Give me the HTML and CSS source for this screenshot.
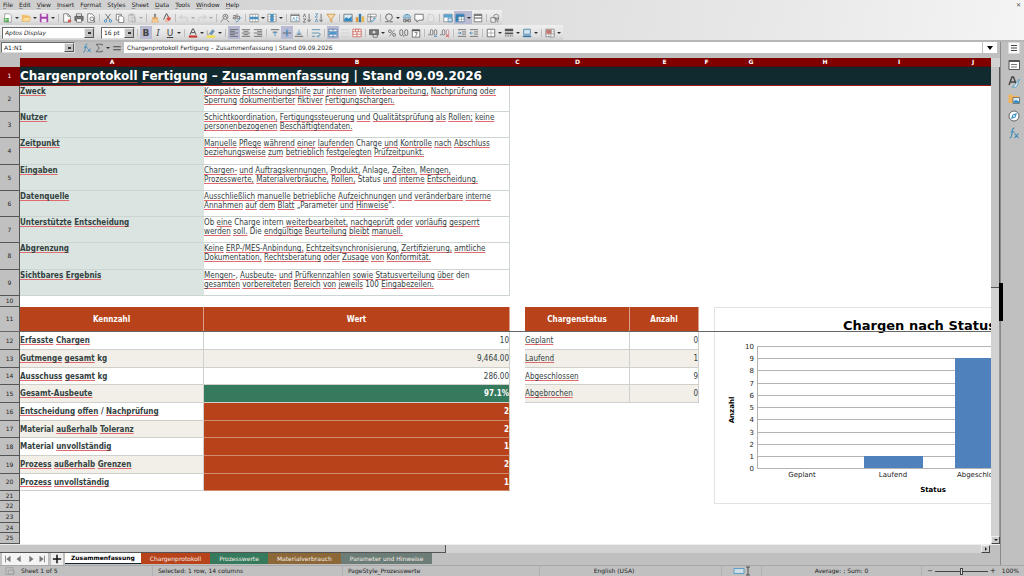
FILE: index.html
```html
<!DOCTYPE html>
<html lang="de">
<head>
<meta charset="utf-8">
<title>Chargenprotokoll Fertigung</title>
<link rel="stylesheet" href="styles.css">
</head>
<body>
<svg class="defs" aria-hidden="true">
  <symbol id="new" viewBox="0 0 12 12"><path d="M2 1h6l2 2v8H2z" fill="#fff" stroke="#777" stroke-width=".7"/><path d="M1 6h6v5H1z" fill="#4ca64c"/><path d="M1 8h6M3.500 6v5" stroke="#fff" stroke-width=".6"/></symbol>
  <symbol id="open" viewBox="0 0 12 12"><path d="M1 2h4l1 1h4v7H1z" fill="#f3c06b"/><path d="M3 5h9l-2 5H1z" fill="#fbdc9c" stroke="#e0a040" stroke-width=".6"/></symbol>
  <symbol id="save" viewBox="0 0 12 12"><path d="M1 1h9l1 1v9H1z" fill="#a345a8"/><path d="M3 1h6v3.500H3zM3 7h6v4H3z" fill="#f3e6f5"/></symbol>
  <symbol id="pdf" viewBox="0 0 12 12"><path d="M2 1h5l3 3v7H2z" fill="#fff" stroke="#555" stroke-width=".8"/><path d="M7 1v3h3" fill="none" stroke="#555" stroke-width=".7"/><path d="M7 8h4v3H7z" fill="#d65a52"/></symbol>
  <symbol id="print" viewBox="0 0 12 12"><path d="M3 1h6v3H3z" fill="#fff" stroke="#444" stroke-width=".8"/><path d="M1 4h10v5H1z" fill="#777" stroke="#444" stroke-width=".7"/><path d="M3 7h6v4H3z" fill="#fff" stroke="#444" stroke-width=".7"/></symbol>
  <symbol id="preview" viewBox="0 0 12 12"><path d="M2 1h5l3 3v7H2z" fill="#fff" stroke="#555" stroke-width=".8"/><circle cx="7" cy="7" r="2.300" fill="#e8f0f4" stroke="#555" stroke-width=".8"/><path d="M9 9l2 2" stroke="#555"/></symbol>
  <symbol id="cut" viewBox="0 0 12 12"><path d="M3 1l5 7M9 1L4 8" stroke="#555" stroke-width=".9"/><circle cx="3" cy="9.500" r="1.500" fill="none" stroke="#2f86c0"/><circle cx="9" cy="9.500" r="1.500" fill="none" stroke="#2f86c0"/></symbol>
  <symbol id="copy" viewBox="0 0 12 12"><path d="M1.500 1.500h6v7h-6z" fill="#fff" stroke="#555" stroke-width=".8"/><path d="M4.500 3.500h4l2 2v6h-6z" fill="#fff" stroke="#555" stroke-width=".8"/></symbol>
  <symbol id="paste" viewBox="0 0 12 12"><path d="M2 2h7v8H2zM4 1h3v2H4zM6 5h4v6H6z" fill="#ddd" stroke="#aaa" stroke-width=".7"/></symbol>
  <symbol id="brush" viewBox="0 0 12 12"><path d="M5 1h2v4H5z" fill="#777"/><path d="M3 5h6v2H3z" fill="#e39a4d"/><path d="M3 7h6l1 4H2z" fill="#f6cf9a" stroke="#d99850" stroke-width=".6"/></symbol>
  <symbol id="clear" viewBox="0 0 12 12"><path d="M2 8L5 1h1l2 5" fill="none" stroke="#444"/><path d="M5 7l3-3 3 3-3 3z" fill="#d8564d"/><path d="M3 9l2-2 3 3-1 1H4z" fill="#f2b9a0"/></symbol>
  <symbol id="undo" viewBox="0 0 12 12"><path d="M4 2L1 5l3 3M1 5h6q4 0 3 5" fill="none" stroke="#c4c4c4"/></symbol>
  <symbol id="redo" viewBox="0 0 12 12"><path d="M8 2l3 3-3 3M11 5H5Q1 5 2 10" fill="none" stroke="#c4c4c4"/></symbol>
  <symbol id="find" viewBox="0 0 12 12"><circle cx="6.500" cy="4.500" r="3" fill="none" stroke="#555" stroke-width=".8"/><path d="M4 7l-3 4M5 5l1.500-2L8 6M8 8l3 3" fill="none" stroke="#555" stroke-width=".8"/></symbol>
  <symbol id="spell" viewBox="0 0 12 12"><path d="M1.500 3h3v4h-3V5h3M6 1v6h3V4H6" fill="none" stroke="#555" stroke-width=".8"/><path d="M4 9l2 2 5-6" fill="none" stroke="#3a8cc4" stroke-width=".9"/></symbol>
  <symbol id="rows" viewBox="0 0 12 12"><path d="M1 1.500h10v9H1z" fill="#fff" stroke="#666" stroke-width=".7"/><path d="M1 4.500h10v3H1z" fill="#3e94cc"/><path d="M4.300 1.500v9M7.600 1.500v9" stroke="#777" stroke-width=".5"/></symbol>
  <symbol id="cols" viewBox="0 0 12 12"><path d="M1 1.500h10v9H1z" fill="#fff" stroke="#666" stroke-width=".7"/><path d="M4 1.500h4v9H4z" fill="#3e94cc"/><path d="M1 4.500h10M1 7.500h10" stroke="#777" stroke-width=".5"/></symbol>
  <symbol id="sort" viewBox="0 0 12 12"><path d="M1 1.500h10v9H1z" fill="#fff" stroke="#666" stroke-width=".8"/><path d="M1 3h10" stroke="#666"/><path d="M3 9l1.500-4L6 9M7 5h2L7 9h2" fill="none" stroke="#3a8cc4" stroke-width=".7"/></symbol>
  <symbol id="asc" viewBox="0 0 12 12"><path d="M1.500 5L3 1l1.500 4M1.500 7h3l-3 4h3" fill="none" stroke="#555" stroke-width=".8"/><path d="M8.500 1v9M6.500 8l2 2.500 2-2.500" fill="none" stroke="#555" stroke-width=".9"/></symbol>
  <symbol id="desc" viewBox="0 0 12 12"><path d="M1.500 1h3l-3 4h3M1.500 11L3 7l1.500 4" fill="none" stroke="#3a7cae" stroke-width=".8"/><path d="M8.500 1v9M6.500 8l2 2.500 2-2.500" fill="none" stroke="#555" stroke-width=".9"/></symbol>
  <symbol id="filter" viewBox="0 0 12 12"><path d="M1 1.500h10L7 6.500V11L5 9.500v-3z" fill="#f7dcae" stroke="#c98a3c" stroke-width=".9"/></symbol>
  <symbol id="image" viewBox="0 0 12 12"><path d="M1 1.500h10v9H1z" fill="#d7ecf8" stroke="#555" stroke-width=".8"/><path d="M1.500 10V7l3-2 2 2 4-3v6z" fill="#3089c4"/></symbol>
  <symbol id="chart" viewBox="0 0 12 12"><path d="M1 5h3v6H1z" fill="#e09a35"/><path d="M4.500 1h3v10h-3z" fill="#3a78ad"/><path d="M8 4h3v7H8z" fill="#e6b84d"/></symbol>
  <symbol id="pivot" viewBox="0 0 12 12"><path d="M1 1.500h10v3H4v6H1z" fill="#fff" stroke="#666" stroke-width=".7"/><path d="M4 1.500v9M1 4.500h5" stroke="#666" stroke-width=".6"/><path d="M6 10q3 0 3-4M5 8.500L6 10l-1 1.500M7.500 7L9 5.500 10.500 7" fill="none" stroke="#3a8cc4" stroke-width=".9"/></symbol>
  <symbol id="omega" viewBox="0 0 12 12"><path d="M1.500 10.500H5V9Q2 7.500 2 5a4 4 0 0 1 8 0q0 2.500-3 4v1.500h3.500" fill="none" stroke="#555"/></symbol>
  <symbol id="link" viewBox="0 0 12 12"><path d="M1.500 6q0-4.500 4.500-4.500T10.500 6zM6 1.500V6M3.500 6q0-3 2.500-4.500Q8.500 3 8.500 6" fill="#d8ecf6" stroke="#3c7fa8" stroke-width=".7"/><path d="M2 7.500h3v3H2zM7 7.500h3v3H7zM4 9h4" fill="none" stroke="#555" stroke-width=".9"/></symbol>
  <symbol id="comment" viewBox="0 0 12 12"><path d="M1 1.500h10v7H6L3.500 11V8.500H1z" fill="#fff" stroke="#555" stroke-width=".9"/></symbol>
  <symbol id="head" viewBox="0 0 12 12"><path d="M2.500 1.500h5l2 2v7h-7z" fill="#e4e4e4" stroke="#c4c4c4" stroke-width=".7"/></symbol>
  <symbol id="area" viewBox="0 0 12 12"><path d="M1 1.500h10v9H1z" fill="#fff" stroke="#666" stroke-width=".7"/><path d="M1 1.500h10v4H1z" fill="#5aa2d0"/><path d="M6 6h5v4.500H6z" fill="#c9deea" stroke="#3c7fa8" stroke-width=".8"/></symbol>
  <symbol id="freeze" viewBox="0 0 12 12"><path d="M1 1.500h10v9H1z" fill="#fff" stroke="#3b5d7c" stroke-width=".7"/><path d="M1 1.500h10v3H1zM1 4.500h3v6H1z" fill="#2f86c0"/><path d="M4.500 1.500v9M7.800 1.500v9M1 4.500h10M1 7.500h10" stroke="#467" stroke-width=".5"/></symbol>
  <symbol id="split" viewBox="0 0 12 12"><path d="M1.500 1.500h9v9h-9z" fill="#fff" stroke="#555" stroke-width=".8"/><path d="M1.500 2.500h9M1.500 6h9" stroke="#555" stroke-width="1.300"/></symbol>
  <symbol id="shapes" viewBox="0 0 12 12"><path d="M1 5.500h5.500V11H1z" fill="#eee" stroke="#666" stroke-width=".8"/><circle cx="7.500" cy="4.500" r="3" fill="none" stroke="#666" stroke-width=".8"/><path d="M7 6l3.500 0L9 11z" fill="none" stroke="#666" stroke-width=".7"/></symbol>
  <symbol id="fcolor" viewBox="0 0 12 12"><path d="M2.500 8L5.500 1h1l3 7M4 5.500h4" fill="none" stroke="#444" stroke-width="1.100"/><path d="M1 9h10v2.500H1z" fill="#c8302a"/></symbol>
  <symbol id="hilite" viewBox="0 0 12 12"><path d="M4 7l4-5 2 1.500L7 8z" fill="#6aa0c8" stroke="#567" stroke-width=".6"/><path d="M1.500 3v5h2" fill="none" stroke="#777" stroke-width=".7"/><path d="M1 9h10v2.500H1z" fill="#f2e23a"/></symbol>
  <symbol id="left" viewBox="0 0 12 12"><path d="M1 2h10M1 4h6M1 6h10M1 8h6M1 10h10" stroke="#555" stroke-width=".9"/></symbol>
  <symbol id="center" viewBox="0 0 12 12"><path d="M1 2h10M3 4h6M1 6h10M3 8h6M1 10h10" stroke="#555" stroke-width=".9"/></symbol>
  <symbol id="right" viewBox="0 0 12 12"><path d="M1 2h10M5 4h6M1 6h10M5 8h6M1 10h10" stroke="#555" stroke-width=".9"/></symbol>
  <symbol id="top" viewBox="0 0 12 12"><path d="M1 2h10" stroke="#555"/><path d="M3 5h6" stroke="#555" stroke-width=".8"/><path d="M6 10V4.500M4 6.500l2-2 2 2" fill="none" stroke="#3a8cc4" stroke-width=".9"/></symbol>
  <symbol id="middle" viewBox="0 0 12 12"><path d="M1 6h10" stroke="#555"/><path d="M6 1v10M4.500 3L6 5l1.500-2M4.500 9L6 7l1.500 2" fill="none" stroke="#3a8cc4" stroke-width=".9"/></symbol>
  <symbol id="bottom" viewBox="0 0 12 12"><path d="M1 10h10" stroke="#555"/><path d="M3 7.500h6" stroke="#555" stroke-width=".8"/><path d="M6 2v5M4 5.500l2 2 2-2" fill="none" stroke="#3a8cc4" stroke-width=".9"/></symbol>
  <symbol id="wrap" viewBox="0 0 12 12"><path d="M1 2h10M1 10h4M1 6h8q2 0 2 2t-3 2M9 8.500L7.500 10 9 11.500" fill="none" stroke="#3a7ca8" stroke-width=".9"/></symbol>
  <symbol id="merge" viewBox="0 0 12 12"><path d="M1 1.500h10v9H1z" fill="#fff" stroke="#446f9c" stroke-width=".9"/><path d="M1 4h10M1 8h10M6 1v3M6 8v3" stroke="#446f9c" stroke-width=".8"/><path d="M1.500 4.500h9v3h-9z" fill="#4a97cc"/></symbol>
  <symbol id="faint" viewBox="0 0 12 12"><path d="M1 2h10M1 6h10M1 10h10" stroke="#ccc" stroke-width=".8"/></symbol>
  <symbol id="unmerge" viewBox="0 0 12 12"><path d="M1 1.500h10v9H1z" fill="#fff" stroke="#c8564f" stroke-width=".9"/><path d="M1 4.500h10M1 7.500h10M4.300 1v3.500M7.600 1v3.500M6 4.500v6" stroke="#c8564f" stroke-width=".9"/></symbol>
  <symbol id="money" viewBox="0 0 12 12"><path d="M.5 2h11v6H.5z" fill="#777" stroke="#444" stroke-width=".7"/><circle cx="6" cy="5" r="1.600" fill="#ddd"/><path d="M5 8h5v3H5z" fill="#eee" stroke="#444" stroke-width=".8"/></symbol>
  <symbol id="percent" viewBox="0 0 12 12"><circle cx="3.500" cy="3.800" r="1.700" fill="none" stroke="#555" stroke-width=".9"/><circle cx="8.500" cy="8.200" r="1.700" fill="none" stroke="#555" stroke-width=".9"/><path d="M9 2L3 10" stroke="#555" stroke-width=".8"/></symbol>
  <symbol id="number" viewBox="0 0 12 12"><rect x="1" y="2" width="3.500" height="7" rx="1.700" fill="none" stroke="#555" stroke-width=".9"/><rect x="7" y="2" width="3.500" height="7" rx="1.700" fill="none" stroke="#555" stroke-width=".9"/><path d="M5.700 8.500v2" stroke="#555"/></symbol>
  <symbol id="date" viewBox="0 0 12 12"><path d="M1.500 2h9v9h-9z" fill="#fff" stroke="#555" stroke-width=".9"/><path d="M1.500 3h9" stroke="#555" stroke-width="1.800"/><path d="M4.500 5.500h3L5.500 10" fill="none" stroke="#555" stroke-width=".9"/></symbol>
  <symbol id="decadd" viewBox="0 0 12 12"><path d="M1.200 7v2" stroke="#555"/><rect x="2.800" y="2" width="3" height="6.500" rx="1.500" fill="none" stroke="#555" stroke-width=".8"/><rect x="7.500" y="2" width="3" height="6.500" rx="1.500" fill="none" stroke="#555" stroke-width=".8"/><path d="M7 10h4" stroke="#3a8cc4"/></symbol>
  <symbol id="decdel" viewBox="0 0 12 12"><path d="M1.200 7v2" stroke="#555"/><rect x="2.800" y="2" width="3" height="6.500" rx="1.500" fill="none" stroke="#555" stroke-width=".8"/><rect x="7.500" y="2" width="3" height="6.500" rx="1.500" fill="none" stroke="#b77" stroke-width=".8"/><path d="M7 8l4 3M11 8l-4 3" stroke="#d84a44" stroke-width=".9"/></symbol>
  <symbol id="indent" viewBox="0 0 12 12"><path d="M1 2h10M6 4.700h5M6 7.300h5M1 10h10" stroke="#555" stroke-width=".9"/><path d="M1 6h4M3 4.500L5 6 3 7.500" fill="none" stroke="#3a7ca8" stroke-width=".8"/></symbol>
  <symbol id="outdent" viewBox="0 0 12 12"><path d="M1 2h10M6 4.700h5M6 7.300h5M1 10h10" stroke="#555" stroke-width=".9"/><path d="M1 6h4M3 4.500L1 6l2 1.500" fill="none" stroke="#3a7ca8" stroke-width=".8"/></symbol>
  <symbol id="borders" viewBox="0 0 12 12"><path d="M1.500 1.500h9v9h-9z" fill="#fff" stroke="#555" stroke-width=".9"/><path d="M6 1.500v9M1.500 6h9" stroke="#888" stroke-width=".7"/></symbol>
  <symbol id="style" viewBox="0 0 12 12"><path d="M1 1h10v3H1zM1 5.500h10v2H1z" fill="#555"/><path d="M1 9.500h10" stroke="#555" stroke-dasharray="2 1"/></symbol>
  <symbol id="bcolor" viewBox="0 0 12 12"><path d="M2 1.500h8v6H2z" fill="#cfe4f2" stroke="#3b7399" stroke-width=".9"/><path d="M1 9h10v2H1z" fill="#3077a8"/></symbol>
  <symbol id="cond" viewBox="0 0 12 12"><path d="M1 1.500h10v9H1z" fill="#fff" stroke="#666" stroke-width=".8"/><path d="M1.500 2h6v5h-6z" fill="#dc7566"/><path d="M4.500 1.500v9M7.800 1.500v9M1 4.500h10M1 7.500h10" stroke="#888" stroke-width=".6"/><path d="M7 7h4v4H7z" fill="#eee" stroke="#777" stroke-width=".6"/></symbol>
  <symbol id="fx" viewBox="0 0 12 12"><path d="M6.500 1Q4.800.8 4.500 3L3.500 9Q3.200 11 1.500 11M2.500 5h4M6.500 6.500l4 4.500M10.500 6.500l-4 4.500" fill="none" stroke="#3c8ab8" stroke-width="1.100"/></symbol>
  <symbol id="sum" viewBox="0 0 12 12"><path d="M10 3V1.500H2.500L6.500 6l-4 4.500H10V9" fill="none" stroke="#555"/></symbol>
  <symbol id="equal" viewBox="0 0 12 12"><path d="M1.500 4.500h9M1.500 8h9" stroke="#444" stroke-width="1.300"/></symbol>
  <symbol id="menu" viewBox="0 0 12 12"><path d="M.5.5h11v11H.5z" fill="#fafafa"/><path d="M3 3.500h6M3 6h6M3 8.500h6" stroke="#444" stroke-width="1"/></symbol>
  <symbol id="props" viewBox="0 0 12 12"><path d="M1 1.500h10.500v9H1z" fill="#fff" stroke="#555"/><path d="M1 2.500h10" stroke="#555"/><path d="M3 5.500h6M3 8h6" stroke="#666" stroke-width=".9"/></symbol>
  <symbol id="styles" viewBox="0 0 12 12"><path d="M1 9L4 1h1.500l2.500 7M2.500 6H7" fill="none" stroke="#444" stroke-width="1.400"/><path d="M11.500 3L7 8.500q-1 2-3 2.500 4 1 5-1z" fill="#eee" stroke="#4a9cc8" stroke-width=".8"/></symbol>
  <symbol id="gallery" viewBox="0 0 12 12"><path d="M.5 1.500H4l1 1.500h6v7H.5z" fill="#f0b45c"/><path d="M5 4.500h6.500v6H5z" fill="#dceefa" stroke="#555" stroke-width=".7"/><path d="M5.500 10V8L8 7l3.500 1.500V10z" fill="#3b8fc6"/></symbol>
  <symbol id="navi" viewBox="0 0 12 12"><circle cx="6" cy="6" r="5" fill="#fff" stroke="#555" stroke-width=".9"/><path d="M9 3L7.500 7.500 3 9l1.500-4.500z" fill="#3c93c6"/><circle cx="6" cy="6" r=".9" fill="#fff"/></symbol>
</svg>

<header class="chrome">
  <nav class="menubar">
    <button><u>F</u>ile</button><button><u>E</u>dit</button><button><u>V</u>iew</button><button><u>I</u>nsert</button><button>F<u>o</u>rmat</button><button>Sty<u>l</u>es</button><button><u>S</u>heet</button><button><u>D</u>ata</button><button><u>T</u>ools</button><button><u>W</u>indow</button><button><u>H</u>elp</button>
    <button class="close" aria-label="Close">✕</button>
  </nav>
  <div class="toolbar">
    <button class="tool" aria-label="New"><svg><use href="#new"/></svg></button><button class="drop" aria-label="New options"></button>
    <button class="tool" aria-label="Open"><svg><use href="#open"/></svg></button><button class="drop" aria-label="Open options"></button>
    <button class="tool" aria-label="Save"><svg><use href="#save"/></svg></button><button class="drop" aria-label="Save options"></button>
    <i class="sep"></i>
    <button class="tool" aria-label="PDF"><svg><use href="#pdf"/></svg></button>
    <button class="tool" aria-label="Print"><svg><use href="#print"/></svg></button>
    <button class="tool" aria-label="Preview"><svg><use href="#preview"/></svg></button>
    <i class="sep"></i>
    <button class="tool" aria-label="Cut"><svg><use href="#cut"/></svg></button>
    <button class="tool" aria-label="Copy"><svg><use href="#copy"/></svg></button>
    <button class="tool" aria-label="Paste"><svg><use href="#paste"/></svg></button><button class="drop dim" aria-label="Paste options"></button>
    <i class="sep"></i>
    <button class="tool" aria-label="Clone formatting"><svg><use href="#brush"/></svg></button>
    <button class="tool" aria-label="Clear formatting"><svg><use href="#clear"/></svg></button>
    <i class="sep"></i>
    <button class="tool" aria-label="Undo"><svg><use href="#undo"/></svg></button><button class="drop dim" aria-label="Undo options"></button>
    <button class="tool" aria-label="Redo"><svg><use href="#redo"/></svg></button><button class="drop dim" aria-label="Redo options"></button>
    <i class="sep"></i>
    <button class="tool" aria-label="Find"><svg><use href="#find"/></svg></button>
    <button class="tool" aria-label="Spelling"><svg><use href="#spell"/></svg></button>
    <i class="sep"></i>
    <button class="tool" aria-label="Row"><svg><use href="#rows"/></svg></button><button class="drop" aria-label="Row options"></button>
    <button class="tool" aria-label="Column"><svg><use href="#cols"/></svg></button><button class="drop" aria-label="Column options"></button>
    <i class="sep"></i>
    <button class="tool" aria-label="Sort"><svg><use href="#sort"/></svg></button>
    <button class="tool" aria-label="Sort ascending"><svg><use href="#asc"/></svg></button>
    <button class="tool" aria-label="Sort descending"><svg><use href="#desc"/></svg></button>
    <button class="tool" aria-label="AutoFilter"><svg><use href="#filter"/></svg></button>
    <i class="sep"></i>
    <button class="tool" aria-label="Image"><svg><use href="#image"/></svg></button>
    <button class="tool" aria-label="Chart"><svg><use href="#chart"/></svg></button>
    <button class="tool" aria-label="Pivot table"><svg><use href="#pivot"/></svg></button>
    <i class="sep"></i>
    <button class="tool" aria-label="Special character"><svg><use href="#omega"/></svg></button><button class="drop" aria-label="Character options"></button>
    <button class="tool" aria-label="Hyperlink"><svg><use href="#link"/></svg></button>
    <button class="tool" aria-label="Comment"><svg><use href="#comment"/></svg></button>
    <button class="tool" aria-label="Headers"><svg><use href="#head"/></svg></button>
    <i class="sep"></i>
    <button class="tool" aria-label="Print area"><svg><use href="#area"/></svg></button>
    <button class="tool on" aria-label="Freeze"><svg><use href="#freeze"/></svg></button><button class="drop on" aria-label="Freeze options"></button>
    <button class="tool" aria-label="Split"><svg><use href="#split"/></svg></button>
    <i class="sep"></i>
    <button class="tool" aria-label="Draw"><svg><use href="#shapes"/></svg></button>
  </div>
  <div class="toolbar">
    <span class="combo combo-font"><select aria-label="Font name"><option>Aptos Display</option></select></span>
    <span class="combo combo-size"><select aria-label="Font size"><option>16 pt</option></select></span>
    <i class="sep"></i>
    <button class="tool on"><b>B</b></button>
    <button class="tool"><em>I</em></button>
    <button class="tool"><u>U</u></button><button class="drop" aria-label="Underline options"></button>
    <i class="sep"></i>
    <button class="tool" aria-label="Font color"><svg><use href="#fcolor"/></svg></button><button class="drop" aria-label="Font color options"></button>
    <button class="tool" aria-label="Highlight"><svg><use href="#hilite"/></svg></button><button class="drop" aria-label="Highlight options"></button>
    <i class="sep"></i>
    <button class="tool on" aria-label="Left"><svg><use href="#left"/></svg></button>
    <button class="tool" aria-label="Center"><svg><use href="#center"/></svg></button>
    <button class="tool" aria-label="Right"><svg><use href="#right"/></svg></button>
    <i class="sep"></i>
    <button class="tool" aria-label="Top"><svg><use href="#top"/></svg></button>
    <button class="tool on" aria-label="Middle"><svg><use href="#middle"/></svg></button>
    <button class="tool" aria-label="Bottom"><svg><use href="#bottom"/></svg></button>
    <i class="sep"></i>
    <button class="tool" aria-label="Wrap"><svg><use href="#wrap"/></svg></button>
    <i class="sep"></i>
    <button class="tool on" aria-label="Merge"><svg><use href="#merge"/></svg></button>
    <button class="tool" aria-label="Merge cells"><svg><use href="#faint"/></svg></button>
    <button class="tool" aria-label="Unmerge"><svg><use href="#unmerge"/></svg></button>
    <i class="sep"></i>
    <button class="tool" aria-label="Currency"><svg><use href="#money"/></svg></button><button class="drop" aria-label="Currency options"></button>
    <button class="tool" aria-label="Percent"><svg><use href="#percent"/></svg></button>
    <button class="tool" aria-label="Number"><svg><use href="#number"/></svg></button>
    <button class="tool" aria-label="Date"><svg><use href="#date"/></svg></button>
    <i class="sep"></i>
    <button class="tool" aria-label="Add decimal"><svg><use href="#decadd"/></svg></button>
    <button class="tool" aria-label="Delete decimal"><svg><use href="#decdel"/></svg></button>
    <i class="sep"></i>
    <button class="tool" aria-label="Indent"><svg><use href="#indent"/></svg></button>
    <button class="tool" aria-label="Outdent"><svg><use href="#outdent"/></svg></button>
    <i class="sep"></i>
    <button class="tool" aria-label="Borders"><svg><use href="#borders"/></svg></button><button class="drop" aria-label="Border options"></button>
    <button class="tool" aria-label="Border style"><svg><use href="#style"/></svg></button><button class="drop" aria-label="Border style options"></button>
    <button class="tool" aria-label="Border color"><svg><use href="#bcolor"/></svg></button><button class="drop" aria-label="Border color options"></button>
    <i class="sep"></i>
    <button class="tool" aria-label="Conditional"><svg><use href="#cond"/></svg></button><button class="drop" aria-label="Conditional options"></button>
  </div>
</header>

<main class="work">
  <div class="document">
    <div class="formula">
      <span class="combo combo-name"><input type="text" aria-label="Name box" value="A1:N1"></span>
      <button class="tool" aria-label="Function wizard"><svg><use href="#fx"/></svg></button>
      <button class="tool" aria-label="Sum"><svg><use href="#sum"/></svg></button><button class="drop" aria-label="Sum options"></button>
      <button class="tool" aria-label="Formula"><svg><use href="#equal"/></svg></button>
      <input class="formula-text" type="text" aria-label="Input line" value="Chargenprotokoll Fertigung – Zusammenfassung | Stand 09.09.2026">
      <button class="expand" aria-label="Expand"></button>
    </div>
    <div class="grid-area">
      <div class="sheet">
        <table class="cells">
          <colgroup><col class="c-head"><col class="c-a"><col class="c-b"><col class="c-gap"><col class="c-d"><col class="c-e"><col class="c-gap"><col class="c-g"><col class="c-g"><col class="c-g"><col class="c-g"></colgroup>
          <thead><tr class="letters"><th class="corner"></th><th>A</th><th>B</th><th>C</th><th>D</th><th>E</th><th>F</th><th>G</th><th>H</th><th>I</th><th>J</th></tr></thead>
          <tbody>
            <tr class="title"><th>1</th><td colspan="10"><s>Chargenprotokoll</s> <s>Fertigung</s> – <s>Zusammenfassung</s> | Stand 09.09.2026</td></tr>
            <tr class="info"><th>2</th><td class="key"><s>Zweck</s></td><td class="desc"><s>Kompakte</s> <s>Entscheidungshilfe</s> <s>zur</s> <s>internen</s> <s>Weiterbearbeitung,</s> <s>Nachprüfung</s> <s>oder</s><br><s>Sperrung</s> <s>dokumentierter</s> <s>fiktiver</s> <s>Fertigungschargen.</s></td></tr>
            <tr class="info"><th>3</th><td class="key"><s>Nutzer</s></td><td class="desc"><s>Schichtkoordination,</s> <s>Fertigungssteuerung</s> <s>und</s> <s>Qualitätsprüfung</s> <s>als</s> <s>Rollen;</s> <s>keine</s><br><s>personenbezogenen</s> <s>Beschäftigtendaten.</s></td></tr>
            <tr class="info tall"><th>4</th><td class="key"><s>Zeitpunkt</s></td><td class="desc"><s>Manuelle</s> <s>Pflege</s> <s>während</s> <s>einer</s> <s>laufenden</s> Charge <s>und</s> <s>Kontrolle</s> <s>nach</s> <s>Abschluss</s><br><s>beziehungsweise</s> <s>zum</s> <s>betrieblich</s> <s>festgelegten</s> <s>Prüfzeitpunkt.</s></td></tr>
            <tr class="info"><th>5</th><td class="key"><s>Eingaben</s></td><td class="desc"><s>Chargen-</s> <s>und</s> <s>Auftragskennungen,</s> <s>Produkt,</s> Anlage, <s>Zeiten,</s> <s>Mengen,</s><br><s>Prozesswerte,</s> <s>Materialverbräuche,</s> <s>Rollen,</s> Status <s>und</s> <s>interne</s> <s>Entscheidung.</s></td></tr>
            <tr class="info"><th>6</th><td class="key"><s>Datenquelle</s></td><td class="desc"><s>Ausschließlich</s> <s>manuelle</s> <s>betriebliche</s> <s>Aufzeichnungen</s> <s>und</s> <s>veränderbare</s> <s>interne</s><br><s>Annahmen</s> <s>auf</s> <s>dem</s> <s>Blatt</s> „Parameter <s>und</s> <s>Hinweise</s>“.</td></tr>
            <tr class="info"><th>7</th><td class="key"><s>Unterstützte</s> <s>Entscheidung</s></td><td class="desc">Ob <s>eine</s> Charge intern <s>weiterbearbeitet,</s> <s>nachgeprüft</s> <s>oder</s> <s>vorläufig</s> <s>gesperrt</s><br><s>werden</s> <s>soll.</s> Die <s>endgültige</s> <s>Beurteilung</s> <s>bleibt</s> <s>manuell.</s></td></tr>
            <tr class="info tall"><th>8</th><td class="key"><s>Abgrenzung</s></td><td class="desc"><s>Keine</s> <s>ERP-/MES-Anbindung,</s> <s>Echtzeitsynchronisierung,</s> <s>Zertifizierung,</s> <s>amtliche</s><br><s>Dokumentation,</s> <s>Rechtsberatung</s> <s>oder</s> <s>Zusage</s> <s>von</s> <s>Konformität.</s></td></tr>
            <tr class="info"><th>9</th><td class="key"><s>Sichtbares</s> <s>Ergebnis</s></td><td class="desc"><s>Mengen-</s>, <s>Ausbeute-</s> <s>und</s> <s>Prüfkennzahlen</s> <s>sowie</s> <s>Statusverteilung</s> <s>über</s> den<br><s>gesamten</s> <s>vorbereiteten</s> <s>Bereich</s> <s>von</s> <s>jeweils</s> 100 <s>Eingabezeilen.</s></td></tr>
            <tr class="blank tall"><th>10</th></tr>
            <tr class="captions"><th>11</th><td class="cap">Kennzahl</td><td class="cap">Wert</td><td></td><td class="cap">Chargenstatus</td><td class="cap">Anzahl</td></tr>
            <tr class="data"><th>12</th><td class="name"><s>Erfasste</s> <s>Chargen</s></td><td class="num">10</td><td></td><td class="stat"><s>Geplant</s></td><td class="num">0</td></tr>
            <tr class="data odd"><th>13</th><td class="name"><s>Gutmenge</s> <s>gesamt</s> kg</td><td class="num">9,464.00</td><td></td><td class="stat"><s>Laufend</s></td><td class="num">1</td></tr>
            <tr class="data short"><th>14</th><td class="name"><s>Ausschuss</s> <s>gesamt</s> kg</td><td class="num">286.00</td><td></td><td class="stat"><s>Abgeschlossen</s></td><td class="num">9</td></tr>
            <tr class="data odd"><th>15</th><td class="name"><s>Gesamt-Ausbeute</s></td><td class="num good">97.1%</td><td></td><td class="stat"><s>Abgebrochen</s></td><td class="num">0</td></tr>
            <tr class="data"><th>16</th><td class="name"><s>Entscheidung</s> <s>offen</s> / <s>Nachprüfung</s></td><td class="num bad">2</td></tr>
            <tr class="data odd short"><th>17</th><td class="name">Material <s>außerhalb</s> <s>Toleranz</s></td><td class="num bad">2</td></tr>
            <tr class="data"><th>18</th><td class="name">Material <s>unvollständig</s></td><td class="num bad">1</td></tr>
            <tr class="data odd"><th>19</th><td class="name"><s>Prozess</s> <s>außerhalb</s> <s>Grenzen</s></td><td class="num bad">2</td></tr>
            <tr class="data short"><th>20</th><td class="name"><s>Prozess</s> <s>unvollständig</s></td><td class="num bad">1</td></tr>
            <tr class="blank"><th>21</th></tr>
            <tr class="blank tall"><th>22</th></tr>
            <tr class="blank tall"><th>23</th></tr>
            <tr class="blank"><th>24</th></tr>
            <tr class="blank tall"><th>25</th></tr>
          </tbody>
        </table>
        <svg class="status-chart" width="436" height="198" viewBox="0 0 436 198">
          <rect x="0.500" y="0.500" width="435" height="196" fill="#fff" stroke="#e2e2e2"/>
          <text class="chart-title" x="129" y="23">Chargen nach Status</text>
          <path d="M43 39.500H408M43 51.500H408M43 63.500H408M43 76.500H408M43 88.500H408M43 100.500H408M43 112.500H408M43 125.500H408M43 137.500H408M43 149.500H408" stroke="#b3b3b3"/>
          <path d="M150 149h59v12h-59zM241 51h59v110h-59z" fill="#4f81bd"/>
          <path d="M43.500 39V161.500H408" fill="none" stroke="#b3b3b3"/>
          <g class="axis-num"><text x="40" y="42">10</text><text x="40" y="54">9</text><text x="40" y="66">8</text><text x="40" y="79">7</text><text x="40" y="91">6</text><text x="40" y="103">5</text><text x="40" y="115">4</text><text x="40" y="128">3</text><text x="40" y="140">2</text><text x="40" y="152">1</text><text x="40" y="164">0</text></g>
          <g class="axis-cat"><text x="88" y="170">Geplant</text><text x="179" y="170">Laufend</text><text x="269" y="170">Abgeschlossen</text></g>
          <g class="axis-title"><text x="219" y="185">Status</text><text transform="translate(20 103) rotate(-90)">Anzahl</text></g>
        </svg>
        <div class="freeze-line"></div>
      </div>
      <div class="vscroll"><div class="vthumb"></div><div class="vtrack"></div><button class="arrow-down" aria-label="Scroll down"></button></div>
    </div>
    <div class="hscroll"><div class="hthumb"></div><div class="htrack"></div><button class="arrow-right" aria-label="Scroll right"></button></div>
    <div class="tabs">
      <div class="tabnav">
        <button aria-label="First sheet"><svg viewBox="0 0 12 12"><path d="M3 2v8" stroke="#777"/><path d="M9 2v8L4 6z" fill="#777"/></svg></button>
        <button aria-label="Previous sheet"><svg viewBox="0 0 12 12"><path d="M8 2v8L3 6z" fill="#777"/></svg></button>
        <button aria-label="Next sheet"><svg viewBox="0 0 12 12"><path d="M4 2v8l5-4z" fill="#777"/></svg></button>
        <button aria-label="Last sheet"><svg viewBox="0 0 12 12"><path d="M9 2v8" stroke="#777"/><path d="M3 2v8l5-4z" fill="#777"/></svg></button>
      </div>
      <button class="add" aria-label="Add sheet"><svg viewBox="0 0 12 12"><path d="M6 1v10M1 6h10" stroke="#111" stroke-width="1.800"/></svg></button>
      <button class="tab tab-active">Zusammenfassung</button>
      <button class="tab tab-rust">Chargenprotokoll</button>
      <button class="tab tab-green">Prozesswerte</button>
      <button class="tab tab-brown">Materialverbrauch</button>
      <button class="tab tab-slate">Parameter und Hinweise</button>
    </div>
  </div>
  <aside class="sidebar">
    <button aria-label="Sidebar settings"><svg><use href="#menu"/></svg></button>
    <button aria-label="Properties"><svg><use href="#props"/></svg></button>
    <button aria-label="Styles"><svg><use href="#styles"/></svg></button>
    <button aria-label="Gallery"><svg><use href="#gallery"/></svg></button>
    <button aria-label="Navigator"><svg><use href="#navi"/></svg></button>
    <button aria-label="Functions"><svg><use href="#fx"/></svg></button>
    <div class="handle"></div>
  </aside>
</main>

<footer class="status">
  <span class="cell cell-sheet"><svg viewBox="0 0 12 12"><path d="M1 2h9v8H1zM4 5h7v5H4z" fill="none" stroke="#999" stroke-width=".8"/></svg>Sheet 1 of 5</span>
  <span class="cell">Selected: 1 row, 14 columns</span>
  <span class="cell">PageStyle_Prozesswerte</span>
  <span class="cell cell-mid cell-open">English (USA)</span>
  <span class="cell"></span>
  <span class="cell cell-mid"><svg class="mode" viewBox="0 0 18 10"><path d="M1 2.500h10v5H1z" fill="#cfdde6" stroke="#5f9fc4"/><path d="M13 1h4M15 1v8M13 9h4" stroke="#444" stroke-width=".9"/></svg></span>
  <span class="cell cell-mid">Average: ; Sum: 0</span>
  <span class="cell cell-zoom"><button>−</button><input type="range" aria-label="Zoom" min="0" max="100" value="50"><button>+</button><output>100%</output></span>
</footer>
</body>
</html>
```

FILE: styles.css
```css
* { box-sizing: border-box; }

body {
  margin: 0;
  height: 100vh;
  display: flex;
  flex-direction: column;
  overflow: hidden;
  background: #c0c0c0;
  color: #1c1c1c;
  font: 6px/8px "DejaVu Sans", sans-serif;
}

button, input, select {
  margin: 0;
  padding: 0;
  border: 0;
  border-radius: 0;
  background: none;
  color: inherit;
  font: inherit;
}

button { display: grid; place-items: center; }
.defs { display: none; }

/* Menu and toolbars */
.chrome {
  flex: none;
  background: linear-gradient(100deg, #cecece, #dcdcdc 45%, #e8e8e8 75%, #f4f4f4);
  border-bottom: 2px solid #b6b6b6;
}
.menubar {
  display: flex;
  gap: 6px;
  height: 10px;
  padding: 0 3px;
}
.menubar button { display: block; }
.menubar u { text-decoration-thickness: 1px; text-decoration-color: #999; }
.menubar .close { margin-left: auto; color: #555; }

.toolbar {
  display: flex;
  align-items: center;
  width: max-content;
  height: 15px;
  padding: 0 1px 0 2px;
  background: linear-gradient(#efefef, #e0e0e0 70%, #d0d0d0);
}
.tool { width: 12px; height: 13px; color: #444; font-size: 9px; line-height: 10px; }
.tool svg { display: block; width: 10px; height: 10px; }
.tool em { font-family: "DejaVu Serif", serif; }
.drop { width: 6px; height: 13px; }
.drop::after {
  content: "";
  border: 2px solid transparent;
  border-top: 2px solid #333;
  border-bottom: 0;
}
.drop.dim::after { border-top-color: #aaa; }
.on { background: #b9bbd2; }
.sep { width: 1px; height: 8px; margin: 0 2px; background: #bdbdbd; }

.combo {
  display: flex;
  height: 12px;
  background: #fff;
  border: 1px solid #6b6b6b;
  border-right-color: #ddd;
  border-bottom-color: #ddd;
}
.combo::after {
  content: "";
  flex: none;
  width: 8px;
  background: linear-gradient(#333, #333) center / 3px 2px no-repeat, #c4c4c4;
  border: 1px solid #eee;
  border-right-color: #555;
  border-bottom-color: #555;
}
.combo select, .combo input {
  flex: 1;
  min-width: 0;
  padding-left: 2px;
  appearance: none;
  outline: 0;
}
.combo-font { width: 93px; margin-right: 6px; }
.combo-font select { font-style: italic; }
.combo-size { width: 34px; }
.combo-name { width: 74px; height: 11px; margin-right: 6px; }

/* Working area */
.work { flex: 1; min-height: 0; display: flex; }
.document { flex: 1; min-width: 0; display: flex; flex-direction: column; }

.formula {
  flex: none;
  display: flex;
  align-items: flex-start;
  height: 16px;
  padding: 0 3px 0 1px;
}
.formula .tool, .formula .drop { height: 11px; }
.formula-text {
  flex: 1;
  min-width: 0;
  height: 11px;
  margin: 0 1px;
  padding-left: 3px;
  background: #fff;
}
.expand { width: 14px; height: 11px; background: #fff; }
.expand::after {
  content: "";
  border: 3px solid transparent;
  border-top: 4px solid #000;
  border-bottom: 0;
}

.grid-area { flex: 1; min-height: 0; display: flex; }
.sheet { position: relative; flex: 1; min-width: 0; overflow: hidden; background: #fff; }

/* Cells */
.cells {
  width: 1009px;
  table-layout: fixed;
  border-collapse: separate;
  border-spacing: 0;
  color: #33413f;
  font: 8px/9px "DejaVu Sans Condensed", "DejaVu Sans", sans-serif;
}
.c-head { width: 20px; }
.c-a { width: 184px; }
.c-b { width: 306px; }
.c-gap { width: 15px; }
.c-d { width: 105px; }
.c-e { width: 69px; }
.c-g { width: 74px; }

.cells th, .cells td { padding: 0; white-space: nowrap; overflow: hidden; }
.cells tbody th {
  background: #c0c0c0;
  border-right: 1px solid #555;
  border-bottom: 1px solid #555;
  color: #222;
  font: 6px/8px "DejaVu Sans", sans-serif;
}
.letters { height: 9px; }
.letters th {
  background: #800000;
  border-bottom: 1px solid #5c0808;
  color: #fff;
  font: bold 6px/8px "DejaVu Sans", sans-serif;
}
.letters .corner { background: #c0c0c0; border-color: #c0c0c0; }

s {
  text-decoration: underline 1px #df6b6e;
  text-decoration-skip-ink: none;
  text-underline-offset: 1px;
}

.title { height: 19px; }
.cells .title th { background: #800000; border-color: #800000; color: #fff; }
.title td {
  background: #112a30;
  border-bottom: 1px solid #a01818;
  color: #fff;
  font: bold 12px/16px "DejaVu Sans", sans-serif;
}
.title s { text-decoration-color: #a8403f; text-underline-offset: 2px; }

.info { height: 26px; }
.info.tall { height: 27px; }
.info td { vertical-align: top; border-bottom: 1px solid #ccd5d2; }
.cells .info td { padding-top: 1px; }
.key { background: #dae5e1; font-weight: bold; }
.desc { border-right: 1px solid #ccd5d2; }

.blank { height: 10px; }
.blank.tall { height: 11px; }

.captions { height: 25px; }
.cap {
  background: #b8431b;
  border-right: 1px solid #d9a08a;
  color: #fff;
  font-weight: bold;
  text-align: center;
}

.data { height: 18px; }
.data.short { height: 17px; }
.name, .stat, .num { border-right: 1px solid #cfcfcb; border-bottom: 1px solid #cfcfcb; }
.name { font-weight: bold; }
.num { text-align: right; }
.odd .name, .odd .stat, .odd .num { background: #f1efe8; }
.data .good, .data .bad { color: #fff; font-weight: bold; }
.data .good { background: #367a5e; }
.data .bad { background: #b8431b; border-bottom-color: #d08a70; }

/* Chart placed over the cells */
.status-chart { position: absolute; left: 714px; top: 249px; }
.status-chart text { fill: #222; font: 7px "DejaVu Sans", sans-serif; }
.status-chart .chart-title { fill: #000; font-size: 13px; font-weight: bold; }
.axis-num text { text-anchor: end; }
.axis-cat text { text-anchor: middle; }
.status-chart .axis-title text { fill: #000; font-weight: bold; text-anchor: middle; }
.freeze-line { position: absolute; left: 0; right: 0; top: 273px; height: 1px; background: #666; }

/* Scroll bars */
.vscroll { flex: none; width: 9px; display: flex; flex-direction: column; background: #d2d2d2; }
.vthumb { flex: 47; margin-top: 9px; background: #c4c4c4; border-right: 1px solid #555; border-bottom: 1px solid #555; }
.vtrack { flex: 53; border-right: 1px solid #999; }
.arrow-down, .arrow-right {
  width: 9px;
  height: 8px;
  background: #cdcdcd;
  border: 1px solid #eee;
  border-right-color: #444;
  border-bottom-color: #444;
}
.arrow-down::after { content: ""; border: 2px solid transparent; border-top-color: #222; border-bottom: 0; }
.arrow-right::after { content: ""; border: 2px solid transparent; border-left-color: #222; border-right: 0; }
.hscroll { flex: none; height: 9px; display: flex; padding-right: 10px; background: #c0c0c0; border-top: 1px solid #eee; }
.hthumb { flex: 45; background: #c6c6c6; border-right: 1px solid #555; border-bottom: 1px solid #555; }
.htrack { flex: 54; background: #d2d2d2; }

/* Sheet tabs */
.tabs { flex: none; display: flex; height: 12px; padding-left: 2px; }
.tabnav { display: flex; width: 46px; background: #f4f4f4; }
.tabnav button { flex: 1; }
.tabnav svg, .add svg { width: 10px; height: 10px; }
.add { width: 12px; margin: 0 2px 0 3px; background: #eee; }
.tab { height: 11px; padding: 0 9px; color: #f3ece4; }
.tab-active { padding: 0 6px; background: #fff; border-bottom: 1px solid #112a30; color: #000; font-weight: bold; }
.tab-rust { background: #b8431b; }
.tab-green { background: #367a5e; }
.tab-brown { background: #8c6838; }
.tab-slate { background: #6c7d77; }

/* Sidebar */
.sidebar {
  position: relative;
  flex: none;
  width: 24px;
  display: flex;
  flex-direction: column;
  align-items: center;
  gap: 5px;
  border-left: 1px solid #8a8a8a;
  padding-left: 3px;
}
.sidebar svg { display: block; width: 12px; height: 12px; }
.handle { position: absolute; left: -2px; top: 241px; width: 4px; height: 38px; background: #000; }

/* Status bar */
.status {
  flex: none;
  display: grid;
  grid-template-columns: 153fr 190fr 197fr 148fr 34fr 40fr 160fr 102fr;
  height: 11px;
  border-top: 1px solid #a8a8a8;
}
.cell { display: flex; align-items: center; min-width: 0; padding-left: 5px; border-right: 1px solid #b0b0b0; white-space: nowrap; }
.cell:last-child, .cell-open { border-right: 0; }
.cell-sheet svg { width: 10px; height: 10px; margin-right: 6px; }
.cell-mid { justify-content: center; padding-left: 0; }
.mode { width: 18px; height: 10px; }
.cell-zoom { gap: 2px; padding-right: 5px; }
.cell-zoom button { font-size: 7px; line-height: 8px; }
.cell-zoom output { margin-left: 4px; }
.cell-zoom input { flex: 1; width: 0; min-width: 0; height: 8px; appearance: none; background: linear-gradient(#444, #444) center / 100% 1px no-repeat; }
.cell-zoom input::-webkit-slider-thumb { appearance: none; width: 3px; height: 7px; background: #ddd; border: 1px solid #444; }
```
